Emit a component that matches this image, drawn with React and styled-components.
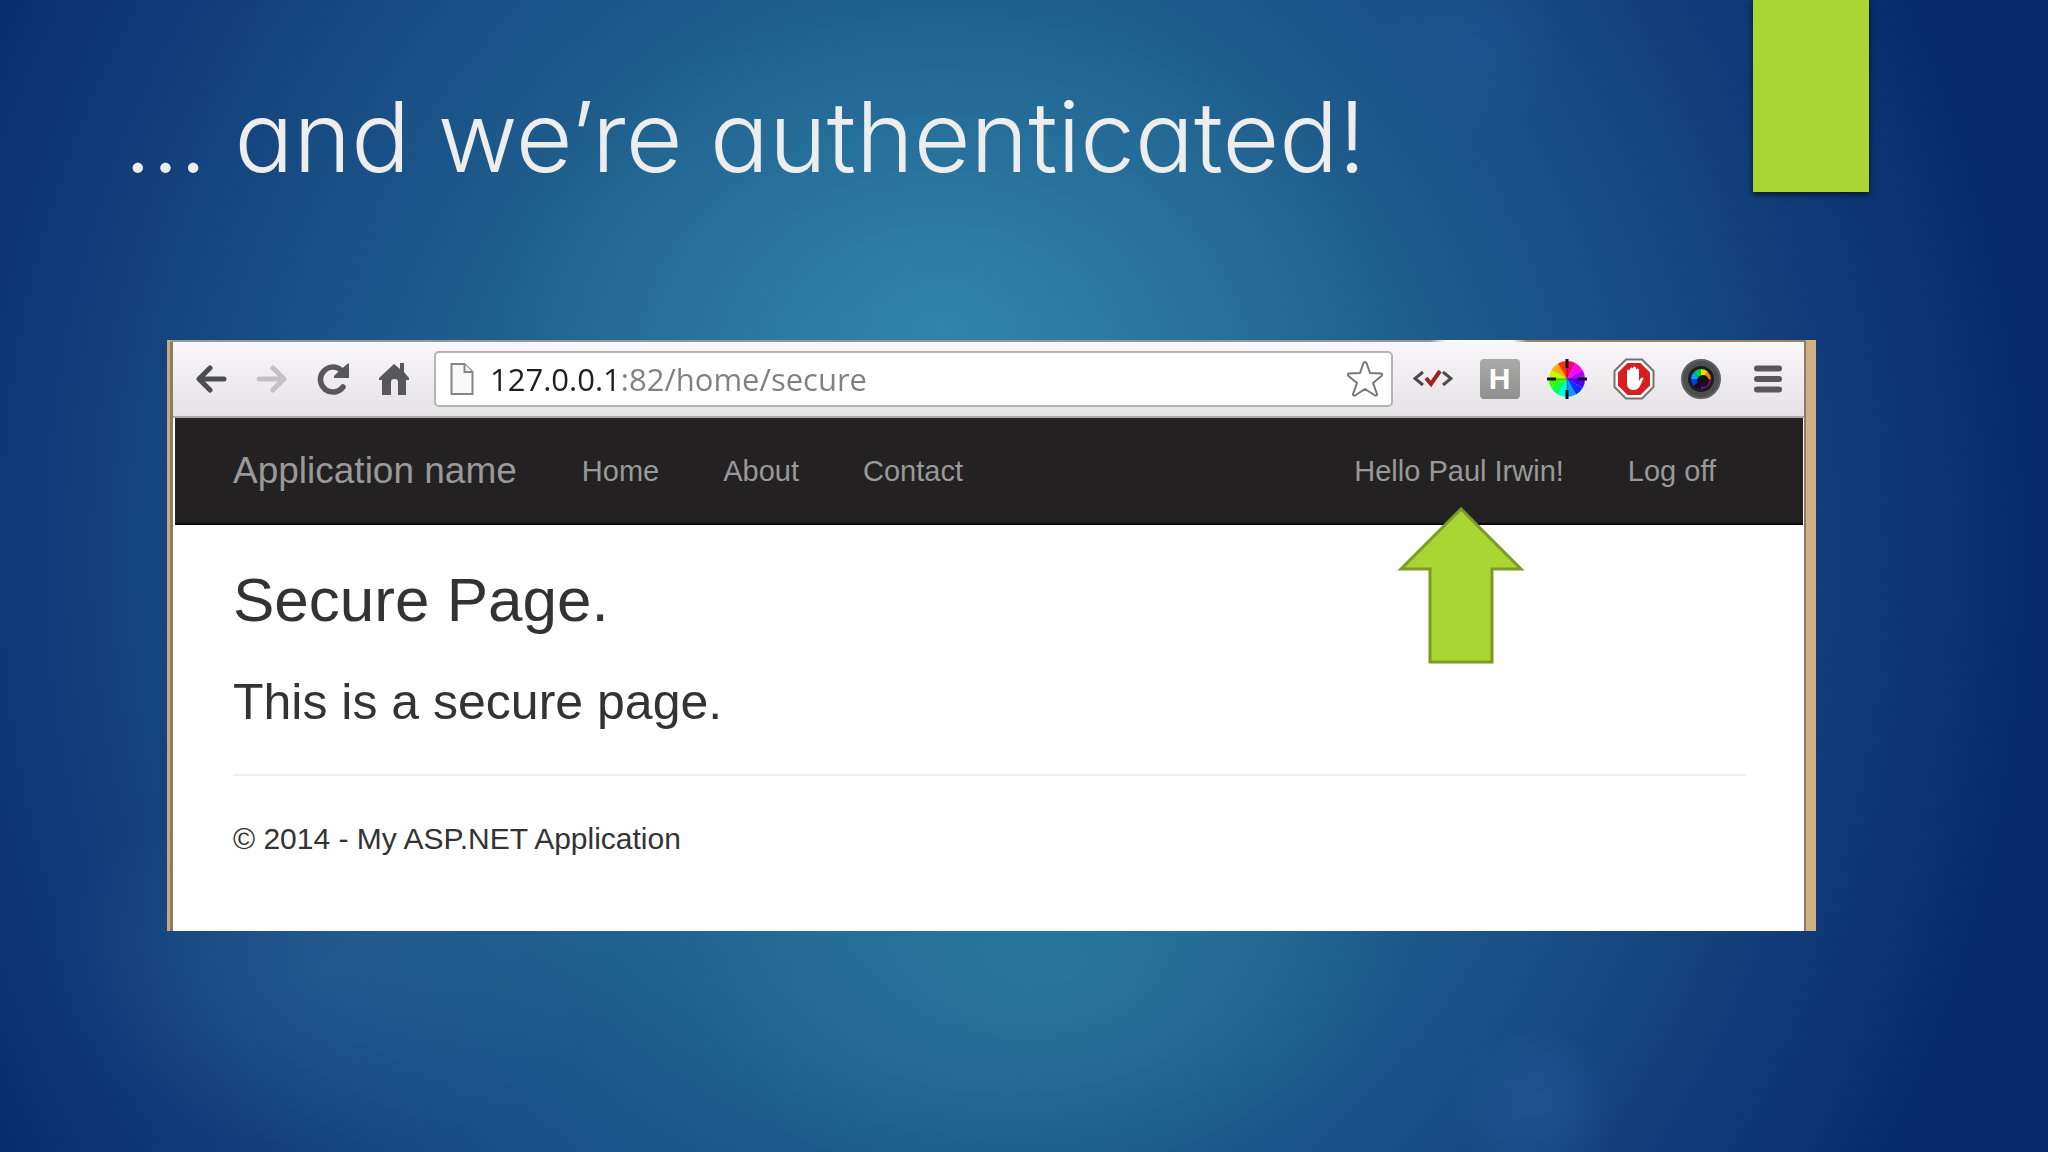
import styled, { createGlobalStyle } from "styled-components";
import { useState } from "react";

const GlobalStyle = createGlobalStyle`
  * {
    box-sizing: border-box;
  }
  body {
    margin: 0;
    background: #02296b;
  }
`;

const Slide = styled.main`
  min-height: 100vh;
  font-family: "Liberation Sans", Arial, sans-serif;
  background:
    radial-gradient(circle at 72% 4%, rgba(50, 100, 170, 0.22), transparent 90px),
    radial-gradient(circle at 75% 96%, rgba(60, 110, 180, 0.3), transparent 80px),
    radial-gradient(ellipse 14% 16% at 16% 84%, rgba(60, 120, 165, 0.3), transparent),
    radial-gradient(ellipse 22% 28% at 46% 28%, rgba(60, 160, 190, 0.42), transparent),
    radial-gradient(ellipse 18% 20% at 51% 84%, rgba(50, 150, 170, 0.36), transparent),
    radial-gradient(
      ellipse 54% 108% at 46% 48%,
      #2a7aa4 0%,
      #20618f 42%,
      #194f85 62%,
      #113b78 82%,
      #05296b 100%
    );
`;

const Header = styled.header`
  display: flex;
  justify-content: space-between;
  align-items: flex-start;
  padding: 0 179px 0 124px;
`;

const Title = styled.h1`
  margin: 0;
  padding-top: 83px;
  font-family: "Century Gothic", Inter, sans-serif;
  font-feature-settings: "cv11";
  font-size: 98px;
  font-weight: 300;
  line-height: 108px;
  color: #ededed;
`;

const Ribbon = styled.div`
  flex: none;
  width: 116px;
  height: 192px;
  background: #abd533;
  box-shadow: 0 3px 6px rgba(0, 10, 30, 0.7);
`;

const Browser = styled.section`
  position: relative;
  margin: 148px 232px 0 167px;
  padding-top: 2px;
  border-left: 3px solid #c9aa7c;
  border-right: 10px solid #cfb084;
  background: linear-gradient(90deg, #8f99a0 0 77%, #ffffff 78% 82%, #9c8362 83%);
`;

const BrowserInner = styled.div`
  border-left: 3px solid #8e7b62;
  border-right: 2px solid #8e7b62;
  background: #fefefe;
`;

const Toolbar = styled.div`
  display: flex;
  align-items: center;
  height: 76px;
  padding: 0 3px 0 7px;
  border-bottom: 2px solid #aaa8aa;
  background: linear-gradient(#f9f7f9, #e4e2e4);
`;

const ToolButton = styled.button`
  display: flex;
  flex: none;
  align-items: center;
  justify-content: center;
  width: ${(props) => (props.$wide ? 67 : 61)}px;
  height: 56px;
  padding: 0;
  border: 0;
  background: none;
`;

const AddressBar = styled.form`
  display: flex;
  flex: 1;
  align-items: center;
  height: 56px;
  margin: 0 6px 0 10px;
  padding: 0 7px 0 14px;
  border: 2px solid #b5b3b5;
  border-radius: 5px;
  background: #ffffff;
`;

const AddressInput = styled.input`
  flex: 1;
  min-width: 0;
  height: 48px;
  margin-left: 16px;
  padding: 0;
  border: 0;
  outline: 0;
  background: linear-gradient(90deg, #1e1e22 0 130px, #808084 130px);
  background-clip: text;
  color: transparent;
  font-family: "Segoe UI", "Open Sans", sans-serif;
  font-size: 31px;
`;

const StarButton = styled.button`
  display: flex;
  padding: 0;
  border: 0;
  background: none;
`;

const LetterBadge = styled.span`
  display: flex;
  align-items: center;
  justify-content: center;
  width: 40px;
  height: 40px;
  border-radius: 4px;
  background: linear-gradient(#aaaaaa, #8f8f8f);
  color: #ffffff;
  font: bold 30px "Liberation Sans", Arial, sans-serif;
`;

const Navbar = styled.nav`
  display: flex;
  align-items: center;
  height: 107px;
  margin: 0 1px 0 2px;
  padding: 0 25px 0 58px;
  border-bottom: 2px solid #080808;
  background: #232122;
`;

const Brand = styled.a`
  margin-right: 33px;
  color: #999999;
  font-size: 37px;
  text-decoration: none;
`;

const NavList = styled.ul`
  display: flex;
  margin: 0 ${(props) => (props.$right ? 30 : 0)}px 0 ${(props) => (props.$right ? "auto" : 0)};
  padding: 0;
  list-style: none;
`;

const NavLink = styled.a`
  display: block;
  padding: 0 32px;
  color: #999999;
  font-size: 29px;
  line-height: 40px;
  text-decoration: none;
`;

const Body = styled.div`
  padding: 37px 58px 72px 60px;
  color: #333333;
`;

const PageTitle = styled.h2`
  margin: 0 0 30px;
  font-size: 62px;
  font-weight: 400;
  line-height: 76px;
`;

const Lead = styled.h3`
  margin: 0 0 38px;
  font-size: 50px;
  font-weight: 400;
  line-height: 68px;
`;

const Rule = styled.hr`
  margin: 0 0 43px;
  border: 0;
  border-top: 2px solid #f0eef0;
`;

const Copyright = styled.p`
  margin: 0;
  font-size: 30px;
  line-height: 40px;
`;

const Arrow = styled.svg`
  position: absolute;
  top: 167px;
  right: 281px;
`;

// Pie of solid wedges, clockwise from the top
const Wheel = ({ cx, cy, r, colors }) => {
  const point = (i) => {
    const angle = (i / colors.length) * Math.PI * 2;
    return `${cx + r * Math.sin(angle)} ${cy - r * Math.cos(angle)}`;
  };
  return colors.map((fill, i) => (
    <path
      key={i}
      d={`M${cx} ${cy}L${point(i)}A${r} ${r} 0 0 1 ${point(i + 1)}Z`}
      fill={fill}
    />
  ));
};

const hues = [
  "#ff0070", "#ff00ff", "#b000ff", "#4800ff", "#0030ff", "#00a0ff",
  "#00ffe0", "#00ff60", "#30ff00", "#c0ff00", "#ffb000", "#ff3000",
];

const BackIcon = () => (
  <svg width="32" height="28" viewBox="0 0 32 28" fill="none" stroke="#4d4d4f" strokeWidth="5" strokeLinecap="round">
    <path d="M29 14H5M15 3L4 14l11 11" strokeLinejoin="round" />
  </svg>
);

const ForwardIcon = () => (
  <svg width="32" height="28" viewBox="0 0 32 28" fill="none" stroke="#c3c1c3" strokeWidth="5" strokeLinecap="round">
    <path d="M3 14h24M17 3l11 11-11 11" strokeLinejoin="round" />
  </svg>
);

const ReloadIcon = () => (
  <svg width="34" height="34" viewBox="0 0 34 34">
    <path d="M27 25a12.500 12.500 0 1 1-2-17" fill="none" stroke="#58585a" strokeWidth="5.500" strokeLinecap="round" />
    <path d="M33 1v15H18v-2l4-4 8-7z" fill="#58585a" />
  </svg>
);

const HomeIcon = () => (
  <svg width="30" height="34" viewBox="0 0 30 34" fill="#58585a">
    <path d="M15 2l6 5V1h4v9l5 6v2h-3v15h-8V20q0-3-3.500-3T12 20v13H3V18H0v-2z" />
  </svg>
);

const PageIcon = () => (
  <svg width="24" height="34" viewBox="0 0 24 34" fill="#f8f8f8" stroke="#858387" strokeWidth="2">
    <path d="M1.500 2h13l8 8v22h-21z" />
    <path d="M14.500 2v8h8" />
  </svg>
);

const StarIcon = () => (
  <svg width="38" height="38" viewBox="0 0 38 38" fill="#ffffff" stroke="#77757a" strokeWidth="2" strokeLinejoin="round">
    <path d="M19 2q1 0 1.500 1L24 13l11 .5q2 .5.500 2.500L27 23l4 11q0 2-2 1.500L19 29l-10 6.500q-2 .5-2-1.500l4-11-8.500-7q-1.500-2 .5-2.500L14 13l3.500-10Q18 2 19 2z" />
  </svg>
);

const ValidatorIcon = () => (
  <svg width="40" height="20" viewBox="0 0 40 20" fill="none" strokeWidth="3">
    <path d="M10 3L2 9.500l8 6.500M30 3l8 6.500-8 6.500" stroke="#4b4b4d" />
    <path d="M13 9l5 6L27 2" stroke="#a32020" strokeWidth="4" />
  </svg>
);

const ColorIcon = () => (
  <svg width="40" height="40" viewBox="0 0 40 40">
    <Wheel cx={20} cy={20} r={18} colors={hues} />
    <path d="M20 0v9M20 31v9M0 20h9M31 20h9" stroke="#111111" strokeWidth="3" />
    <path d="M20 9v22M9 20h22" stroke="#000000" strokeOpacity="0.4" />
  </svg>
);

const StopIcon = () => (
  <svg width="42" height="42" viewBox="0 0 42 42">
    <path d="M13 1.500h16L40.500 13v16L29 40.500H13L1.500 29V13z" fill="#ffffff" stroke="#77706e" strokeWidth="2" />
    <path d="M14.500 5h13L37 14.500v13L27.500 37h-13L5 27.500v-13z" fill="#d81e1e" />
    <path
      d="M14 21v-8q0-1.500 1.500-1.500T17 13v6V11q0-1.500 1.500-1.500T20 11v8V10q0-1.500 1.500-1.500T23 10v9-7q0-1.500 1.500-1.500T26 12v11l2-3q2-1 2.500.5L27 28q-2 4-7 4-6 0-6-7z"
      fill="#ffffff"
    />
  </svg>
);

const LensIcon = () => (
  <svg width="40" height="40" viewBox="0 0 40 40">
    <circle cx="20" cy="20" r="19" fill="#4c4e50" stroke="#5f6163" strokeWidth="2" />
    <circle cx="20" cy="20" r="13" fill="#1c1c1e" />
    <Wheel
      cx={20}
      cy={20}
      r={10}
      colors={["#e8e000", "#ff8000", "#b00060", "#8000b0", "#180030", "#0040e0", "#00a0ff", "#00d050"]}
    />
    <circle cx="22" cy="22" r="6" fill="#111114" />
  </svg>
);

const MenuIcon = () => (
  <svg width="28" height="28" viewBox="0 0 28 28" stroke="#59575a" strokeWidth="6" strokeLinecap="round">
    <path d="M3 3.500h22M3 14h22M3 24.500h22" />
  </svg>
);

const App = () => {
  const [url, setUrl] = useState("127.0.0.1:82/home/secure");

  return (
    <>
      <GlobalStyle />
      <Slide>
        <Header>
          <Title>… and we’re authenticated!</Title>
          <Ribbon />
        </Header>
        <Browser>
          <BrowserInner>
            <Toolbar>
              <ToolButton aria-label="Back"><BackIcon /></ToolButton>
              <ToolButton aria-label="Forward"><ForwardIcon /></ToolButton>
              <ToolButton aria-label="Reload"><ReloadIcon /></ToolButton>
              <ToolButton aria-label="Home page"><HomeIcon /></ToolButton>
              <AddressBar onSubmit={(e) => e.preventDefault()}>
                <PageIcon />
                <AddressInput
                  type="text"
                  aria-label="Address"
                  value={url}
                  onChange={(e) => setUrl(e.target.value)}
                />
                <StarButton type="button" aria-label="Bookmark"><StarIcon /></StarButton>
              </AddressBar>
              <ToolButton $wide aria-label="Validator"><ValidatorIcon /></ToolButton>
              <ToolButton $wide><LetterBadge>H</LetterBadge></ToolButton>
              <ToolButton $wide aria-label="Color picker"><ColorIcon /></ToolButton>
              <ToolButton $wide aria-label="Ad blocker"><StopIcon /></ToolButton>
              <ToolButton $wide aria-label="Camera"><LensIcon /></ToolButton>
              <ToolButton $wide aria-label="Menu"><MenuIcon /></ToolButton>
            </Toolbar>
            <Navbar>
              <Brand href="#">Application name</Brand>
              <NavList>
                <li><NavLink href="#">Home</NavLink></li>
                <li><NavLink href="#">About</NavLink></li>
                <li><NavLink href="#">Contact</NavLink></li>
              </NavList>
              <NavList $right>
                <li><NavLink href="#">Hello Paul Irwin!</NavLink></li>
                <li><NavLink href="#">Log off</NavLink></li>
              </NavList>
            </Navbar>
            <Body>
              <PageTitle>Secure Page.</PageTitle>
              <Lead>This is a secure page.</Lead>
              <Rule />
              <Copyright>© 2014 - My ASP.NET Application</Copyright>
            </Body>
          </BrowserInner>
          <Arrow width="128" height="158" viewBox="0 0 128 158" aria-hidden="true">
            <path
              d="M64 2L124 62H95V155H33V62H4z"
              fill="#abd533"
              stroke="#7c9b25"
              strokeWidth="3"
            />
          </Arrow>
        </Browser>
      </Slide>
    </>
  );
};

export default App;
